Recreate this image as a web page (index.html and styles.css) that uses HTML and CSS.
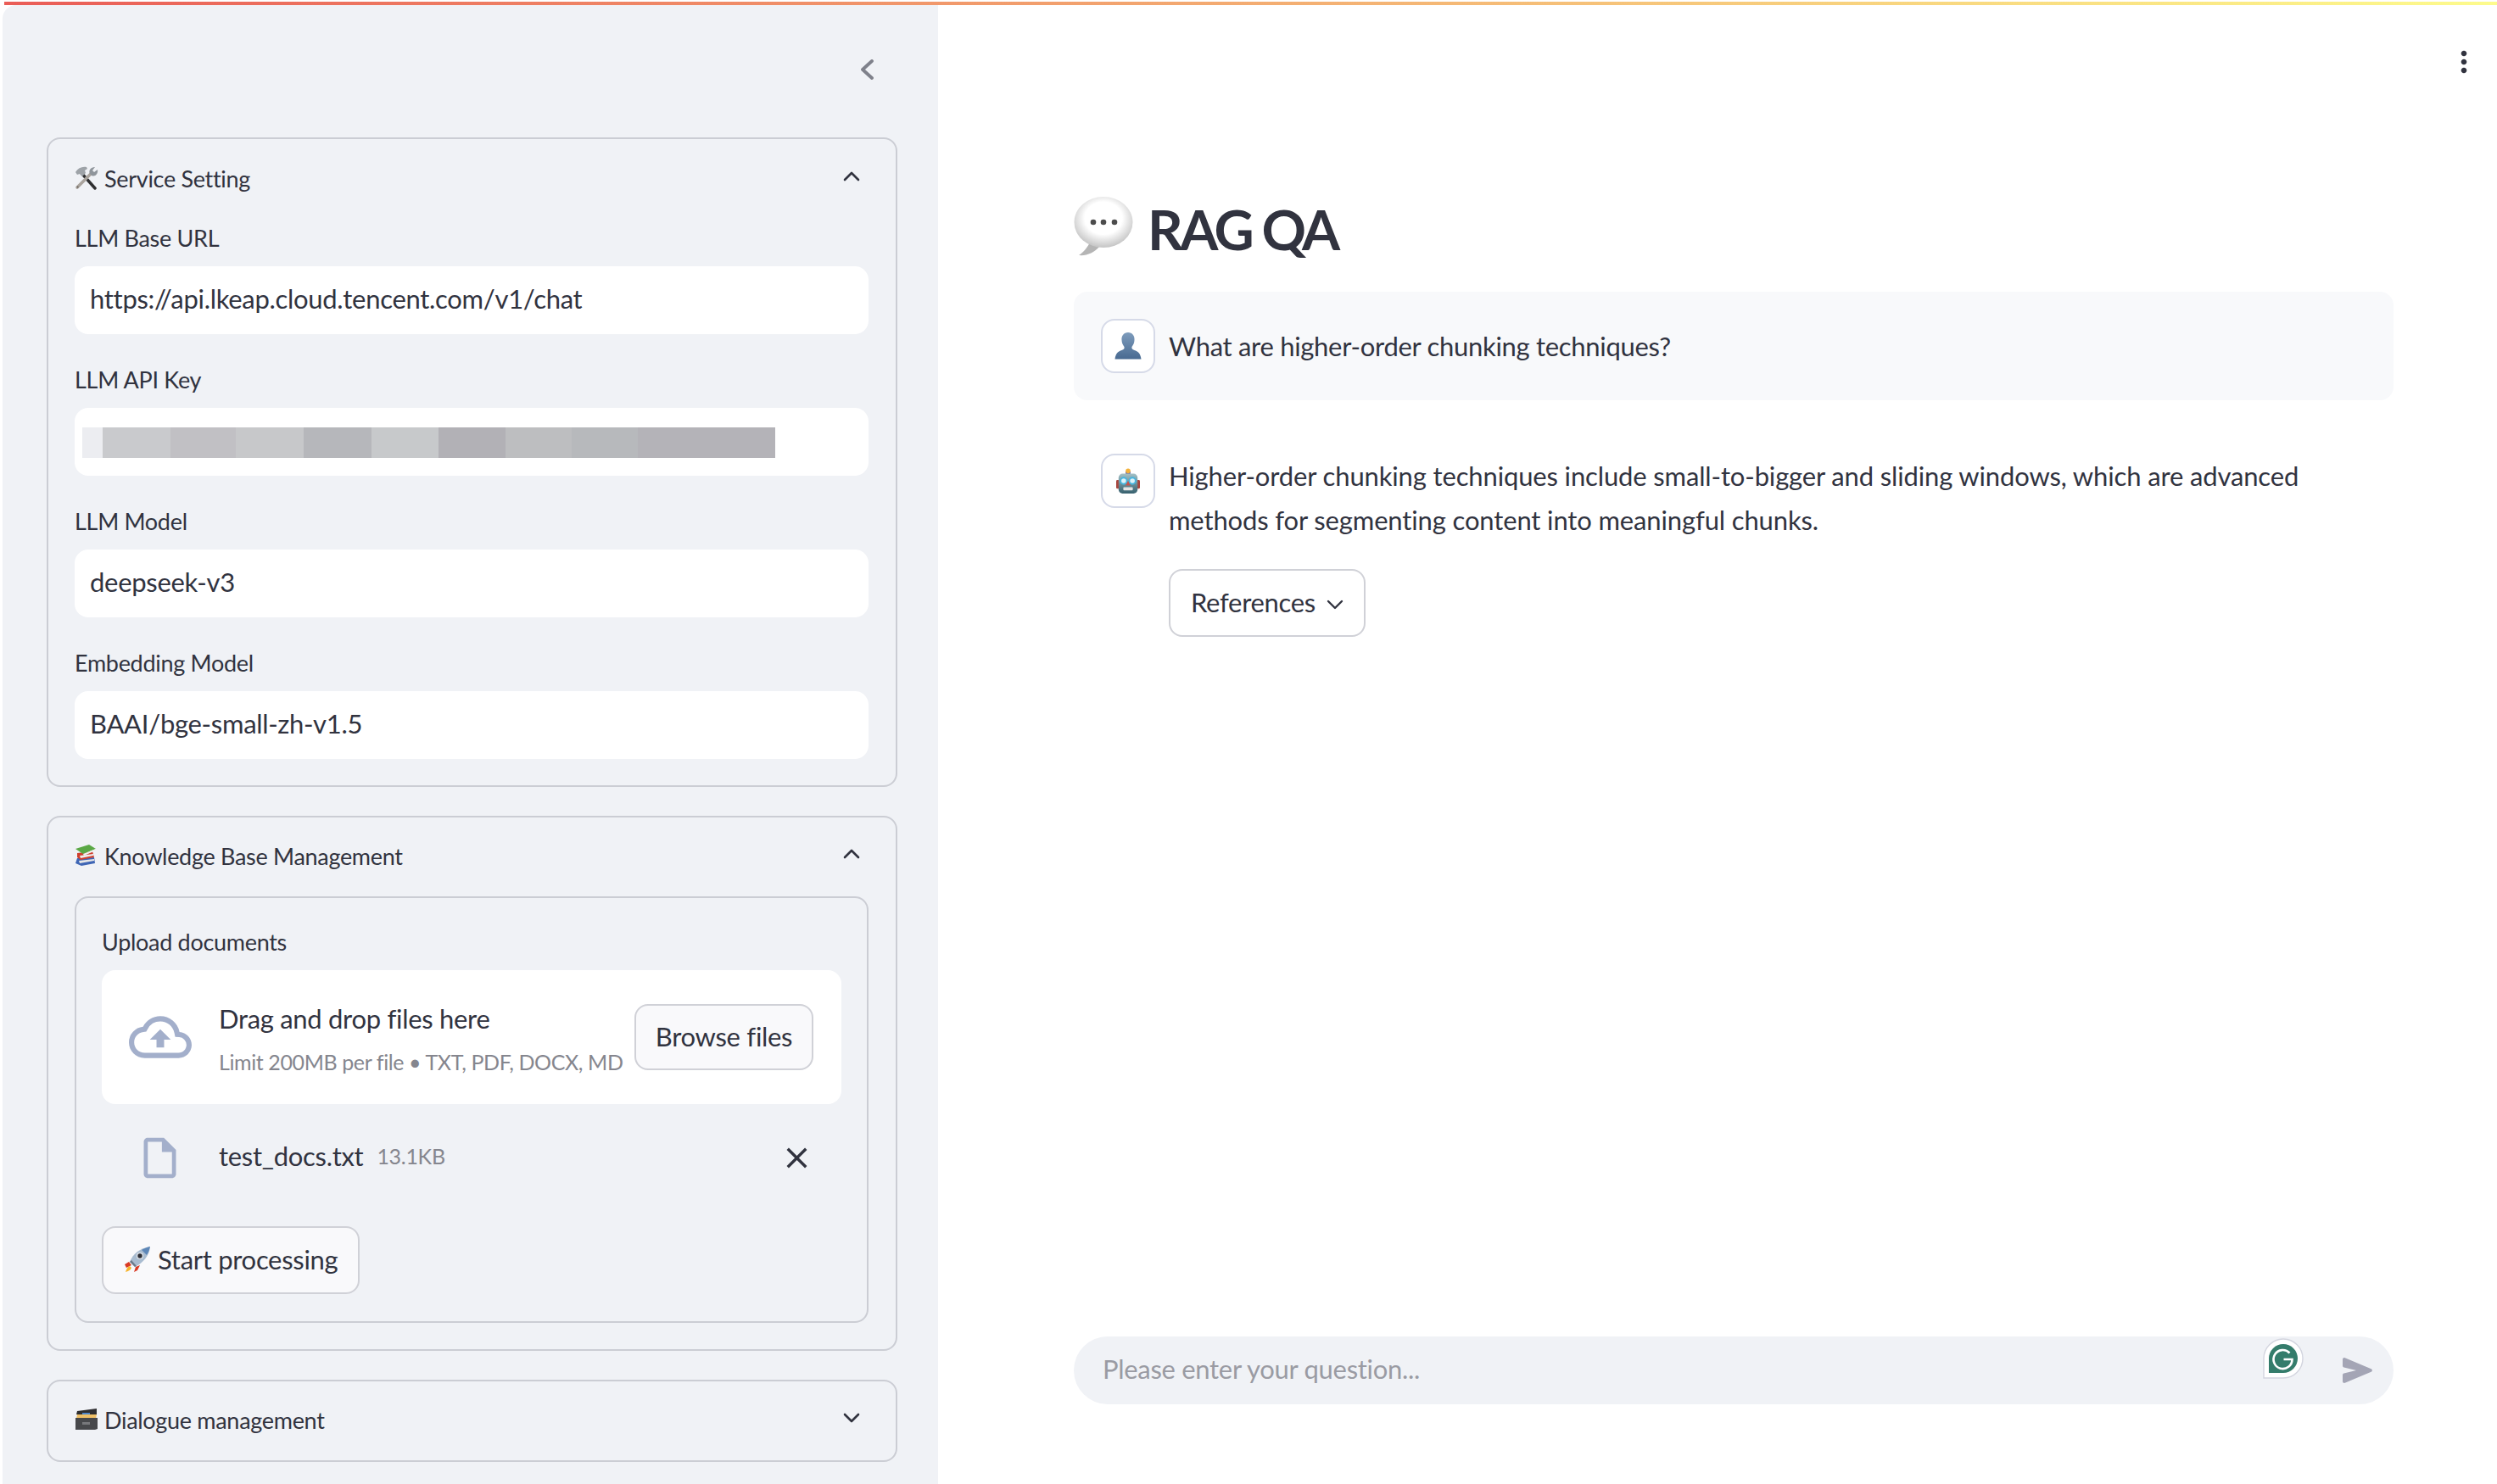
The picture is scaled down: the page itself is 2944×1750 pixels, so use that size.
FILE: index.html
```html
<!DOCTYPE html>
<html lang="en">
<head>
<meta charset="UTF-8">
<meta name="viewport" content="width=device-width, initial-scale=1.0">
<title>RAG QA</title>
<link rel="stylesheet" href="styles.css">
</head>
<body>

<div class="top-bar"></div>

<div class="app">

<!-- Sidebar -->
<aside class="sidebar">
    <div class="sidebar-head">
        <svg class="collapse-icon" viewBox="0 0 16 24"><path d="M14 2 3 12l11 10" fill="none" stroke="#7f818b" stroke-width="3.800" stroke-linecap="round" stroke-linejoin="round"/></svg>
    </div>

    <section class="panel">
        <div class="panel-head service-head">
            <svg class="emoji" viewBox="0 0 28 28">
                <path d="M8 8 24 26" stroke="#2e2e30" stroke-width="3.400" stroke-linecap="round"/>
                <path d="M1 7C4 2 9 0 14 1l1 2-3 2 1 3-4 4-3-3-3 1z" fill="#9ea3a8"/>
                <path d="M3 25 20 8" stroke="#a9a39d" stroke-width="3.600" stroke-linecap="round"/>
                <path d="M18 9c-2-4 1-8 6-8l-3 4 2 2 4-3c1 5-3 9-7 7z" fill="#8f959b"/>
                <circle cx="3.600" cy="24.400" r="1" fill="#66605b"/>
            </svg>
            <span class="panel-title">Service Setting</span>
            <svg class="chevron" viewBox="0 0 20 12"><path d="M2 10 10 2l8 8" fill="none" stroke="#31333f" stroke-width="2.600" stroke-linecap="round" stroke-linejoin="round"/></svg>
        </div>

        <div class="field">
            <div class="field-label">LLM Base URL</div>
            <div class="text-input">https://api.lkeap.cloud.tencent.com/v1/chat</div>
        </div>
        <div class="field">
            <div class="field-label">LLM API Key</div>
            <div class="text-input key-input">
                <div class="blur-strip">
                    <span></span><span></span><span></span><span></span><span></span>
                    <span></span><span></span><span></span><span></span><span></span>
                </div>
            </div>
        </div>
        <div class="field">
            <div class="field-label">LLM Model</div>
            <div class="text-input">deepseek-v3</div>
        </div>
        <div class="field">
            <div class="field-label">Embedding Model</div>
            <div class="text-input">BAAI/bge-small-zh-v1.5</div>
        </div>
    </section>

    <section class="panel">
        <div class="panel-head knowledge-head">
            <svg class="emoji" viewBox="0 0 28 28">
                <path d="M3 17l20-1 1 7-16 3-7-3z" fill="#3f66b5"/>
                <path d="M5 20l18-2v2L6 23z" fill="#e8e8e8"/>
                <path d="M3 11l18-2 2 7-16 3-4-3z" fill="#cf3f2e"/>
                <path d="M6 14l16-2v2L7 17z" fill="#eee"/>
                <path d="M1 6l16-5 8 5-15 6z" fill="#5aa845"/>
                <path d="M10 12l15-6v2L11 14z" fill="#f0f0f0"/>
            </svg>
            <span class="panel-title">Knowledge Base Management</span>
            <svg class="chevron" viewBox="0 0 20 12"><path d="M2 10 10 2l8 8" fill="none" stroke="#31333f" stroke-width="2.600" stroke-linecap="round" stroke-linejoin="round"/></svg>
        </div>

        <div class="upload-box">
            <div class="field-label">Upload documents</div>
            <div class="dropzone">
                <svg class="cloud-icon" viewBox="0 0 24 24"><path d="M19.35 10.04A7.49 7.49 0 0 0 12 4C9.11 4 6.64 5.64 5.4 8.04A5.994 5.994 0 0 0 0 14c0 3.31 2.69 6 6 6h13c2.76 0 5-2.24 5-5 0-2.64-2.05-4.78-4.65-4.96zM19 18H6c-2.21 0-4-1.79-4-4 0-2.05 1.53-3.76 3.56-3.97l1.07-.11.5-.95A5.469 5.469 0 0 1 12 6c2.62 0 4.88 1.86 5.39 4.43l.3 1.5 1.53.11A2.98 2.98 0 0 1 22 15c0 1.65-1.35 3-3 3zM8 13h2.55v3h2.9v-3H16l-4-4z"/></svg>
                <div class="drop-text">
                    <div class="drop-title">Drag and drop files here</div>
                    <div class="drop-limit">Limit 200MB per file • TXT, PDF, DOCX, MD</div>
                </div>
                <button class="btn browse-btn">Browse files</button>
            </div>
            <div class="file-row">
                <svg class="file-icon" viewBox="0 0 24 24"><path d="M14 2H6c-1.1 0-1.99.9-1.99 2L4 20c0 1.1.89 2 1.99 2H18c1.1 0 2-.9 2-2V8l-6-6zM6 20V4h7v5h5v11H6z"/></svg>
                <span class="file-name">test_docs.txt</span>
                <span class="file-size">13.1KB</span>
                <svg class="file-remove" viewBox="0 0 24 24"><path d="M19 6.41 17.59 5 12 10.59 6.41 5 5 6.41 10.59 12 5 17.59 6.41 19 12 13.41 17.59 19 19 17.59 13.41 12z"/></svg>
            </div>
            <button class="btn start-btn">
                <svg class="emoji" viewBox="0 0 32 32">
                    <path d="M6 19 1 22l2 4 6-3z" fill="#d93a24"/>
                    <path d="M14 25l-2 6 4-2 3-6z" fill="#d93a24"/>
                    <path d="M7 24c-3 1-4 4-5 7 3-1 6-2 7-5z" fill="#f7b52c"/>
                    <path d="M7 19C11 9 19 3 31 1c-1 11-8 19-18 24z" fill="#a9bcd0"/>
                    <path d="M31 1c-4 1-7 2-10 4l6 6c2-3 3-6 4-10z" fill="#5d87b8"/>
                    <circle cx="19" cy="12" r="3.400" fill="#2d2f36" stroke="#dfe4ea" stroke-width="1.400"/>
                    <path d="M7 19l6 6 2-1-6-7z" fill="#6c7a8a"/>
                </svg>
                <span>Start processing</span>
            </button>
        </div>
    </section>

    <section class="panel">
        <div class="panel-head dialogue-head">
            <svg class="emoji" viewBox="0 0 28 28">
                <path d="M3 4 26 1v7H2z" fill="#2f2f31"/>
                <path d="M3 8h23l-1 5H2z" fill="#efc067"/>
                <path d="M9 6h9v2H9z" fill="#4f87c9"/>
                <path d="M1 12h26v13l-3 1H1z" fill="#47484b"/>
                <path d="M9 17h9v3H9z" fill="#77787b"/>
            </svg>
            <span class="panel-title">Dialogue management</span>
            <svg class="chevron" viewBox="0 0 20 12"><path d="M2 2l8 8 8-8" fill="none" stroke="#31333f" stroke-width="2.600" stroke-linecap="round" stroke-linejoin="round"/></svg>
        </div>
    </section>
</aside>

<!-- Main area -->
<main class="main">
    <svg class="menu-icon" viewBox="0 0 24 24"><path d="M12 8c1.1 0 2-.9 2-2s-.9-2-2-2-2 .9-2 2 .9 2 2 2zm0 2c-1.1 0-2 .9-2 2s.9 2 2 2 2-.9 2-2-.9-2-2-2zm0 6c-1.1 0-2 .9-2 2s.9 2 2 2 2-.9 2-2-.9-2-2-2z"/></svg>

    <h1 class="page-title">
        <svg class="title-emoji" viewBox="0 0 70 70">
            <defs>
                <radialGradient id="bubble-fill" cx="50%" cy="42%" r="58%">
                    <stop offset="0.55" stop-color="#ffffff"/>
                    <stop offset="1" stop-color="#c4c4c4"/>
                </radialGradient>
            </defs>
            <path d="M20 52C16 60 12 65 6 69c9 1 18-3 24-10z" fill="#b5b5b5"/>
            <ellipse cx="35" cy="30" rx="34.500" ry="30" fill="url(#bubble-fill)"/>
            <circle cx="23" cy="30" r="3.300" fill="#4c4c4c"/>
            <circle cx="35" cy="30" r="3.300" fill="#4c4c4c"/>
            <circle cx="48" cy="30" r="3.300" fill="#4c4c4c"/>
        </svg>
        <span>RAG QA</span>
    </h1>

    <div class="chat-message user-message">
        <div class="avatar">
            <svg class="avatar-user" viewBox="0 0 32 32">
                <defs>
                    <linearGradient id="bust-fill" x1="0" y1="0" x2="0" y2="1">
                        <stop offset="0" stop-color="#7e9cbc"/>
                        <stop offset="1" stop-color="#486a91"/>
                    </linearGradient>
                </defs>
                <path d="M16 0c5 0 8 4 7.500 9 0 3-1.500 6-3 8-.5 2 .5 3 3 4 4 1.500 7 3 8 10.500H.5c1-7.500 4-9 8-10.500 2.500-1 3.500-2 3-4-1.500-2-3-5-3-8C8 4 11 0 16 0z" fill="url(#bust-fill)"/>
            </svg>
        </div>
        <div class="message-text">What are higher-order chunking techniques?</div>
    </div>

    <div class="chat-message bot-message">
        <div class="avatar">
            <svg class="avatar-bot" viewBox="0 0 30 32">
                <defs>
                    <linearGradient id="robot-fill" x1="0" y1="0" x2="0" y2="1">
                        <stop offset="0" stop-color="#a3c0c6"/>
                        <stop offset="1" stop-color="#36606e"/>
                    </linearGradient>
                </defs>
                <rect x="0" y="15" width="4" height="11" rx="1.500" fill="#a8463e"/>
                <rect x="26" y="15" width="4" height="11" rx="1.500" fill="#a8463e"/>
                <rect x="12" y="4" width="6" height="5" fill="#5f5a9e"/>
                <circle cx="15" cy="3.500" r="3" fill="#f3b23c"/>
                <rect x="3" y="7" width="24" height="25" rx="5" fill="url(#robot-fill)"/>
                <circle cx="9.500" cy="16" r="4" fill="#dff2f8" stroke="#47b5df" stroke-width="2"/>
                <circle cx="20.500" cy="16" r="4" fill="#dff2f8" stroke="#47b5df" stroke-width="2"/>
                <path d="M15 16l3 6h-6z" fill="#c8524a"/>
                <rect x="9" y="24" width="12" height="4" rx="1" fill="#e5e5e5"/>
            </svg>
        </div>
        <div class="message-body">
            <div class="message-text">Higher-order chunking techniques include small-to-bigger and sliding windows, which are advanced methods for segmenting content into meaningful chunks.</div>
            <button class="btn references-btn">
                <span>References</span>
                <svg class="ref-chevron" viewBox="0 0 20 12"><path d="M2 2l8 8 8-8" fill="none" stroke="#31333f" stroke-width="2.400" stroke-linecap="round" stroke-linejoin="round"/></svg>
            </button>
        </div>
    </div>

    <div class="chat-input">
        <span class="chat-placeholder">Please enter your question...</span>
        <svg class="grammarly" viewBox="0 0 48 48">
            <path d="M1 47V24a23 23 0 1 1 23 23z" fill="#fff" stroke="#d3d5df" stroke-width="1.400"/>
            <path d="M7 41V24a17 17 0 1 1 17 17z" fill="#347c6b"/>
            <path d="M31.500 17.500A11 11 0 1 0 34.500 25H24.500" fill="none" stroke="#fff" stroke-width="2.600"/>
        </svg>
        <svg class="send-icon" viewBox="0 0 24 24"><path d="M3 5.510v3.710c0 .46.31.86.76.97L11 12l-7.240 1.810c-.45.11-.76.51-.76.97v3.710c0 .72.73 1.200 1.390.92l15.420-6.490c.82-.34.82-1.500 0-1.840L4.390 4.580C3.730 4.310 3 4.790 3 5.510z"/></svg>
    </div>
</main>

</div>

</body>
</html>
```

FILE: styles.css
```css
* {
box-sizing: border-box;
}
body {
margin: 0;
background-color: #fff;
color: #31333f;
font-family: Lato, "Noto Sans", sans-serif;
font-size: 31px;
letter-spacing: -0.3px;
}
.top-bar {
height: 4px;
margin: 2px 0 0 5px;
background: linear-gradient(90deg, #ea5d57, #fdfb8c);
}
.app {
display: flex;
height: 1744px;
overflow: hidden;
}

/* sidebar */
.sidebar {
width: 1103px;
margin-left: 3px;
padding-left: 52px;
background-color: #f0f2f6;
border-top-left-radius: 16px;
}
.sidebar-head {
display: flex;
justify-content: flex-end;
height: 156px;
padding: 64px 76px 0 0;
}
.collapse-icon {
width: 16px;
height: 24px;
}
.panel {
width: 1003px;
margin-bottom: 34px;
padding: 0 32px 31px 31px;
border: 2px solid #cbcdd4;
border-radius: 16px;
}
.panel-head {
display: flex;
align-items: center;
height: 93px;
}
.service-head {
height: 96px;
padding-bottom: 4px;
margin-bottom: 2px;
}
.knowledge-head {
padding-bottom: 3px;
}
.dialogue-head {
padding-bottom: 3px;
margin-bottom: -31px;
}
.emoji {
width: 28px;
height: 28px;
flex: none;
}
.panel-title {
margin-left: 7px;
font-size: 27px;
}
.chevron {
width: 20px;
height: 12px;
margin: -4px 10px 0 auto;
}
.field {
margin-bottom: 35px;
}
.field:last-child {
margin-bottom: 0;
}
.field-label {
height: 40px;
margin-bottom: 12px;
font-size: 27px;
line-height: 38px;
}
.text-input {
height: 80px;
padding-left: 18px;
background-color: #fff;
border-radius: 16px;
line-height: 77px;
}
.key-input {
padding: 23px 0 0 9px;
}
.blur-strip {
display: grid;
grid-template-columns: 24px 80px 77px 80px 80px 79px 79px 78px 78px 162px;
height: 36px;
}
.blur-strip span:nth-child(1) { background-color: #ecedf1; }
.blur-strip span:nth-child(2) { background-color: #c9cacd; }
.blur-strip span:nth-child(3) { background-color: #c1c0c4; }
.blur-strip span:nth-child(4) { background-color: #c7c8ca; }
.blur-strip span:nth-child(5) { background-color: #b6b7bb; }
.blur-strip span:nth-child(6) { background-color: #c7c9cb; }
.blur-strip span:nth-child(7) { background-color: #b2b1b6; }
.blur-strip span:nth-child(8) { background-color: #bdbec0; }
.blur-strip span:nth-child(9) { background-color: #b7b9bc; }
.blur-strip span:nth-child(10) { background-color: #b4b3b8; }

/* upload */
.upload-box {
padding: 33px 30px 32px;
border: 2px solid #cbcdd4;
border-radius: 16px;
}
.dropzone {
display: flex;
align-items: center;
height: 158px;
padding: 0 33px 0 32px;
background-color: #fff;
border-radius: 16px;
}
.cloud-icon {
width: 74px;
height: 74px;
flex: none;
fill: #a3afcb;
}
.drop-text {
margin-left: 32px;
padding-top: 7px;
}
.drop-title {
height: 40px;
line-height: 40px;
}
.drop-limit {
margin-top: 11px;
height: 40px;
color: #85868e;
font-size: 25px;
letter-spacing: -0.4px;
line-height: 40px;
white-space: nowrap;
}
.btn {
display: inline-flex;
align-items: center;
height: 80px;
padding: 0 0 3px;
background-color: #f9f9fb;
border: 2px solid #d0d1d7;
border-radius: 16px;
color: #31333f;
font-family: inherit;
font-size: 31px;
letter-spacing: -0.3px;
}
.browse-btn {
width: 211px;
height: 78px;
margin-left: auto;
flex: none;
justify-content: center;
}
.file-row {
display: flex;
align-items: center;
height: 78px;
margin: 24px 0 42px;
padding-left: 40px;
}
.file-icon {
width: 57px;
height: 57px;
flex: none;
fill: #a3afcb;
}
.file-name {
margin: -4px 0 0 41px;
}
.file-size {
margin: -4px 0 0 16px;
color: #85868e;
font-size: 25px;
}
.file-remove {
width: 41px;
height: 41px;
margin-left: auto;
margin-right: 32px;
fill: #31333f;
}
.start-btn {
width: 304px;
padding-left: 24px;
gap: 8px;
}
.start-btn .emoji {
width: 32px;
height: 32px;
}

/* main */
.main {
position: relative;
display: flex;
flex-direction: column;
flex: 1;
padding: 220px 122px 94px 160px;
}
.menu-icon {
position: absolute;
top: 47px;
right: 19px;
width: 40px;
height: 40px;
fill: #31333f;
}
.page-title {
display: flex;
align-items: center;
gap: 17px;
height: 88px;
margin: 0 0 30px;
font-size: 65px;
font-weight: 700;
letter-spacing: -3.5px;
line-height: 84px;
}
.title-emoji {
width: 70px;
height: 70px;
margin-top: -6px;
}
.chat-message {
display: flex;
gap: 16px;
padding: 32px;
border-radius: 16px;
}
.user-message {
align-items: center;
background-color: #f8f9fb;
margin-bottom: 31px;
}
.avatar {
display: flex;
align-items: center;
justify-content: center;
width: 64px;
height: 64px;
flex: none;
background-color: #fff;
border: 2px solid #d6dae8;
border-radius: 16px;
}
.avatar-user {
width: 32px;
height: 32px;
}
.avatar-bot {
width: 28px;
height: 30px;
}
.message-text {
line-height: 52px;
}
.bot-message .message-text {
letter-spacing: -0.14px;
}
.references-btn {
gap: 13px;
width: 232px;
margin-top: 32px;
padding-left: 24px;
background-color: #fff;
}
.ref-chevron {
width: 20px;
height: 12px;
margin-top: 6px;
}
.chat-input {
position: relative;
display: flex;
align-items: center;
justify-content: space-between;
height: 80px;
margin-top: auto;
padding: 0 18px 0 34px;
background-color: #f0f2f6;
border-radius: 40px;
}
.chat-placeholder {
margin-top: -4px;
color: #9a9ba3;
}
.grammarly {
position: absolute;
top: 2px;
right: 106px;
width: 48px;
height: 48px;
}
.send-icon {
width: 48px;
height: 48px;
fill: #a4a5b5;
}
```
